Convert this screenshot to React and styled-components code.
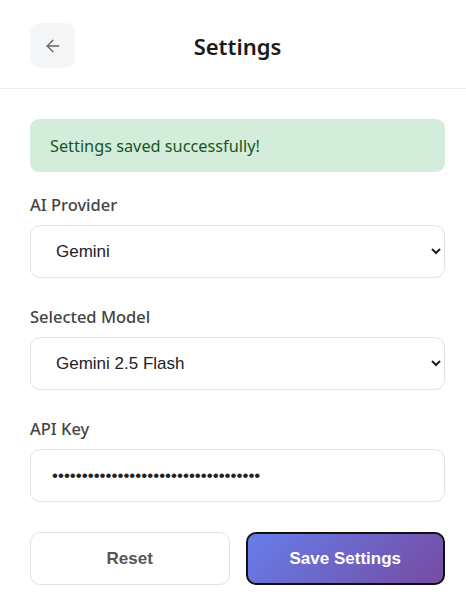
import React from "react";
import styled, { createGlobalStyle } from "styled-components";
import { ArrowLeft } from "lucide-react";

const GlobalStyle = createGlobalStyle`
  html, body {
    margin: 0;
    padding: 0;
    background: #ffffff;
  }
  * {
    box-sizing: border-box;
  }
`;

const Settings = () => {
  return (
    <Page>
      <GlobalStyle />
      <Header>
        <BackButton type="button" aria-label="Back">
          <ArrowLeft size={20} strokeWidth={1.6} color="#666" />
        </BackButton>
        <Title>Settings</Title>
        <Spacer />
      </Header>

      <Content>
        <Alert>Settings saved successfully!</Alert>

        <Field>
          <Label>AI Provider</Label>
          <Select defaultValue="gemini">
            <option value="gemini">Gemini</option>
            <option value="openai">OpenAI</option>
          </Select>
        </Field>

        <Field>
          <Label>Selected Model</Label>
          <Select defaultValue="flash">
            <option value="flash">Gemini 2.5 Flash</option>
            <option value="pro">Gemini 2.5 Pro</option>
          </Select>
        </Field>

        <Field>
          <Label>API Key</Label>
          <Input type="password" defaultValue="AIzaSyD8x2kQ9vLm3Np7Rt5Wc1Hj6Fg4BzQ" />
        </Field>

        <Actions>
          <ResetButton type="button">Reset</ResetButton>
          <SaveButton type="button">Save Settings</SaveButton>
        </Actions>
      </Content>
    </Page>
  );
};

export default Settings;

const Page = styled.div`
  width: 466px;
  min-height: 610px;
  background: #fff;
  font-family: "Noto Sans", "Open Sans", sans-serif;
`;

const Header = styled.div`
  display: flex;
  align-items: center;
  padding: 23px 21px 20px 30px;
  border-bottom: 1px solid #eeeeee;
`;

const BackButton = styled.button`
  width: 45px;
  height: 45px;
  border: none;
  border-radius: 10px;
  background: #f5f6f8;
  display: flex;
  align-items: center;
  justify-content: center;
  padding: 0;
  cursor: pointer;
`;

const Spacer = styled.div`
  width: 45px;
`;

const Title = styled.h1`
  flex: 1;
  margin: 0;
  text-align: center;
  font-size: 22px;
  font-weight: 600;
  color: #1a1a1a;
`;

const Content = styled.div`
  padding: 30px 21px 30px 30px;
`;

const Alert = styled.div`
  background: #d4edda;
  color: #155724;
  border-radius: 9px;
  padding: 0 20px;
  height: 53px;
  display: flex;
  align-items: center;
  font-size: 16.3px;
  margin-bottom: 21px;
`;

const Field = styled.div`
  display: flex;
  flex-direction: column;
  margin-bottom: 27px;
`;

const Label = styled.label`
  font-size: 16.5px;
  font-weight: 500;
  color: #444;
  line-height: 24px;
  margin-bottom: 8px;
`;

const Select = styled.select`
  width: 100%;
  height: 53px;
  border: 1px solid #e1e1e6;
  border-radius: 10px;
  background: #fff;
  padding: 0 10px 0 21px;
  font-family: "Liberation Sans", Arial, sans-serif;
  font-size: 17px;
  color: #222;
  outline: none;
`;

const Input = styled.input`
  width: 100%;
  height: 53px;
  border: 1px solid #e1e1e6;
  border-radius: 10px;
  background: #fff;
  padding: 0 21px;
  font-family: "Liberation Sans", Arial, sans-serif;
  font-size: 17px;
  color: #222;
  outline: none;
`;

const Actions = styled.div`
  display: grid;
  grid-template-columns: 1fr 1fr;
  gap: 16px;
  margin-top: 30px;
`;

const ActionButton = styled.button`
  height: 53px;
  border-radius: 10px;
  font-family: "Liberation Sans", Arial, sans-serif;
  font-size: 17px;
  font-weight: 700;
  cursor: pointer;
`;

const ResetButton = styled(ActionButton)`
  background: #fff;
  border: 1px solid #e1e1e6;
  color: #555;
`;

const SaveButton = styled(ActionButton)`
  background: linear-gradient(135deg, #667eea 0%, #764ba2 100%);
  border: 2px solid #111;
  color: #fff;
`;
